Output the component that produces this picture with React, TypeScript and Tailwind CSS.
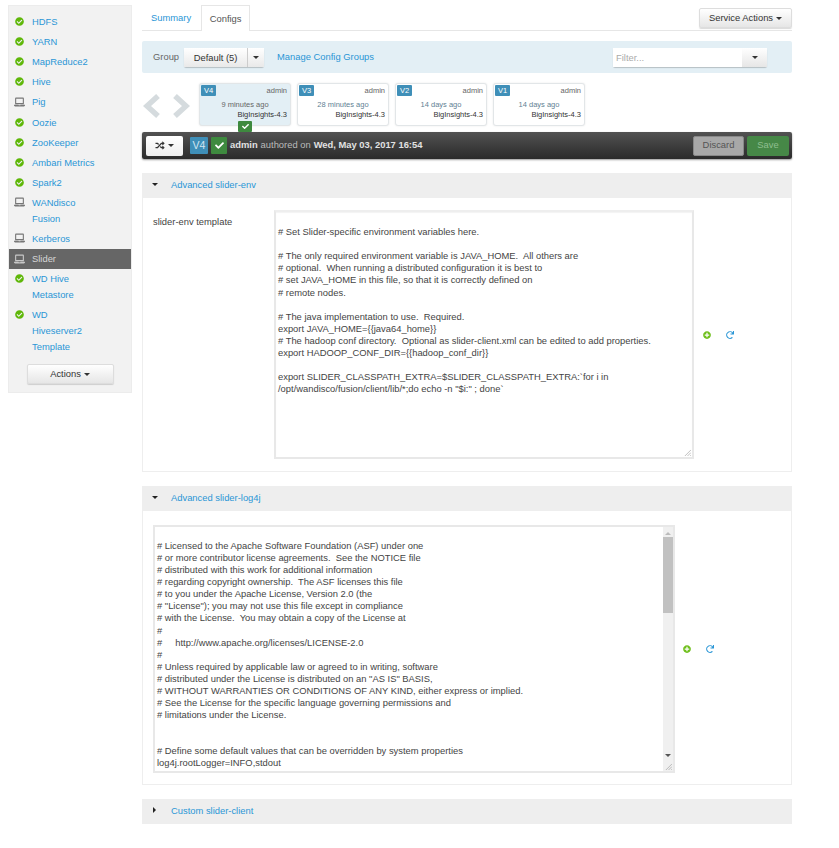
import { FaCheck, FaCheckCircle, FaLaptop, FaPlusCircle, FaRandom, FaRedo } from "react-icons/fa";

const services = [
  { lines: ["HDFS"], ok: true },
  { lines: ["YARN"], ok: true },
  { lines: ["MapReduce2"], ok: true },
  { lines: ["Hive"], ok: true },
  { lines: ["Pig"], ok: false },
  { lines: ["Oozie"], ok: true },
  { lines: ["ZooKeeper"], ok: true },
  { lines: ["Ambari Metrics"], ok: true },
  { lines: ["Spark2"], ok: true },
  { lines: ["WANdisco", "Fusion"], ok: false },
  { lines: ["Kerberos"], ok: false },
  { lines: ["Slider"], ok: false, active: true },
  { lines: ["WD Hive", "Metastore"], ok: true },
  { lines: ["WD", "Hiveserver2", "Template"], ok: true },
];

const versions = [
  { v: "V4", ago: "9 minutes ago", current: true },
  { v: "V3", ago: "28 minutes ago" },
  { v: "V2", ago: "14 days ago" },
  { v: "V1", ago: "14 days ago" },
];

const envText = `
# Set Slider-specific environment variables here.

# The only required environment variable is JAVA_HOME.  All others are
# optional.  When running a distributed configuration it is best to
# set JAVA_HOME in this file, so that it is correctly defined on
# remote nodes.

# The java implementation to use.  Required.
export JAVA_HOME={{java64_home}}
# The hadoop conf directory.  Optional as slider-client.xml can be edited to add properties.
export HADOOP_CONF_DIR={{hadoop_conf_dir}}

export SLIDER_CLASSPATH_EXTRA=$SLIDER_CLASSPATH_EXTRA:\`for i in
/opt/wandisco/fusion/client/lib/*;do echo -n "$i:" ; done\``;

const log4jText = `
# Licensed to the Apache Software Foundation (ASF) under one
# or more contributor license agreements.  See the NOTICE file
# distributed with this work for additional information
# regarding copyright ownership.  The ASF licenses this file
# to you under the Apache License, Version 2.0 (the
# "License"); you may not use this file except in compliance
# with the License.  You may obtain a copy of the License at
#
#     http://www.apache.org/licenses/LICENSE-2.0
#
# Unless required by applicable law or agreed to in writing, software
# distributed under the License is distributed on an "AS IS" BASIS,
# WITHOUT WARRANTIES OR CONDITIONS OF ANY KIND, either express or implied.
# See the License for the specific language governing permissions and
# limitations under the License.


# Define some default values that can be overridden by system properties
log4j.rootLogger=INFO,stdout
log4j.threshold=ALL`;

function Caret({ color = "border-t-[#333]" }: { color?: string }) {
  return <span className={`inline-block w-0 h-0 border-x-[3px] border-x-transparent border-t-[3px] ${color}`} />;
}

function Sidebar() {
  return (
    <aside className="w-[124px] h-[388px] mt-[5px] shrink-0 bg-[#f2f2f2] border border-[#ececec] pt-[6px]">
      {services.map((s) => (
        <div key={s.lines[0]} className={`flex py-[2.05px] ${s.active ? "bg-[#666]" : ""}`}>
          <span className="w-[16px] h-[16px] shrink-0 flex items-center">
            {s.ok ? (
              <FaCheckCircle className="ml-[6px] -mt-[1px] w-[9px] h-[9px] text-[#5fb709]" />
            ) : (
              <FaLaptop className={`w-[11px] h-[10px] ml-[5px] -mt-[1px] ${s.active ? "text-[#c8c8c8]" : "text-[#777]"}`} />
            )}
          </span>
          <div className={`pl-[7px] text-[9.4px] leading-[16px] ${s.active ? "text-[#d6d6d6]" : "text-[#2a96d6]"}`}>
            {s.lines.map((l) => (
              <div key={l}>{l}</div>
            ))}
          </div>
        </div>
      ))}
      <div className="flex justify-center mt-[7px]">
        <button className="w-[87px] h-[20px] rounded-[2px] border border-[#ddd] bg-gradient-to-b from-white to-[#e6e6e6] shadow-[0_1px_1px_rgba(0,0,0,0.15)] text-[9.4px] text-[#333] flex items-center justify-center gap-[3px]">
          Actions <Caret />
        </button>
      </div>
    </aside>
  );
}

function VersionCard({ v, ago, current }: { v: string; ago: string; current?: boolean }) {
  return (
    <div className={`relative w-[92px] h-[43px] rounded-[3px] border border-[#e2e6e8] shadow-[0_0_2px_rgba(0,0,0,0.1)] text-[7.5px] ${current ? "bg-[#e3eff5]" : "bg-white"}`}>
      <span className="absolute left-[1px] top-[1px] w-[15px] h-[11px] rounded-[1px] bg-[#3f8fb8] text-white text-[7.5px] leading-[11px] text-center">{v}</span>
      <span className="absolute right-[3px] top-[1px] leading-[11px] text-[#666]">admin</span>
      <div className={`absolute inset-x-0 top-[15px] text-center leading-[11px] ${current ? "text-[#666]" : "text-[#5f7f94]"}`}>{ago}</div>
      <div className="absolute right-[3px] top-[25px] leading-[11px] text-[#333]">BigInsights-4.3</div>
      {current && (
        <span className="absolute left-[38px] top-[37px] w-[14px] h-[11px] rounded-[1px] bg-[#3e8a3f] flex items-center justify-center">
          <FaCheck className="w-[7px] h-[7px] text-white" />
        </span>
      )}
    </div>
  );
}

function Section({ title, open = true, children, bodyClass = "" }: { title: string; open?: boolean; children?: React.ReactNode; bodyClass?: string }) {
  return (
    <section className="mt-[14px]">
      <div className="h-[25px] bg-[#eee] flex items-center pl-[10px]">
        {open ? (
          <span className="inline-block w-0 h-0 border-x-[3.5px] border-x-transparent border-t-[3.5px] border-t-[#222] -mt-[3px]" />
        ) : (
          <span className="inline-block w-0 h-0 border-y-[3.5px] border-y-transparent border-l-[3.5px] border-l-[#222] ml-[1px] -mt-[4px]" />
        )}
        <span className={`text-[9.4px] text-[#2a96d6] ${open ? "ml-[13px]" : "ml-[15px]"}`}>{title}</span>
      </div>
      {open && <div className={`border border-t-0 border-[#eee] ${bodyClass}`}>{children}</div>}
    </section>
  );
}

function Grip() {
  return (
    <svg viewBox="0 0 8 8" className="absolute right-[1px] bottom-[1px] w-[7px] h-[7px]">
      <path d="M1 8 8 1M4 8 8 4M7 8 8 7" stroke="#999" strokeWidth="0.7" fill="none" />
    </svg>
  );
}

function RowIcons() {
  return (
    <div className="flex items-center gap-[15px]">
      <FaPlusCircle className="w-[8px] h-[8px] text-[#6fbf1c]" />
      <FaRedo className="w-[8px] h-[8px] text-[#2a96d6]" />
    </div>
  );
}

function Arrows() {
  return (
    <svg viewBox="0 0 47 26" className="w-[47px] h-[26px] ml-[1px] mt-[10px]">
      <path d="M15 3 4 13l11 10M32 3l11 10-11 10" stroke="#d5dbde" strokeWidth="5.5" fill="none" />
    </svg>
  );
}

export default function App() {
  return (
    <div className="w-[839px] h-[848px] bg-white overflow-hidden flex pl-[8px] font-['Liberation_Sans',Arial,sans-serif] text-[#333]">
      <Sidebar />
      <main className="w-[650px] ml-[10px] shrink-0">
        <div className="h-[31px] pt-[5px] flex items-start border-b border-[#e6e6e6]">
          <span className="h-[25px] px-[9px] text-[9.4px] leading-[25px] text-[#2a96d6]">Summary</span>
          <span className="h-[26px] w-[49px] text-center text-[9.4px] leading-[25px] text-[#555] border border-b-0 border-[#e6e6e6] bg-white ml-[1px]">Configs</span>
          <button className="ml-auto mt-[3px] w-[93px] h-[20px] rounded-[2px] border border-[#ddd] bg-gradient-to-b from-white to-[#e6e6e6] shadow-[0_1px_1px_rgba(0,0,0,0.15)] text-[9.4px] text-[#333] flex items-center justify-center gap-[3px]">
            Service Actions <Caret />
          </button>
        </div>

        <div className="mt-[10px] h-[32px] rounded-[2px] bg-[#e3eff5] flex items-center pl-[11px] text-[9.4px]">
          <span className="text-[#666]">Group</span>
          <div className="ml-[5px] flex h-[19px] rounded-[2px] shadow-[0_1px_1px_rgba(0,0,0,0.2)]">
            <span className="w-[64px] bg-gradient-to-b from-white to-[#e9e9e9] border-r border-[#ccc] text-center leading-[19px] text-[#333]">Default (5)</span>
            <span className="w-[16px] bg-gradient-to-b from-white to-[#e9e9e9] flex items-center justify-center"><Caret /></span>
          </div>
          <span className="ml-[13px] text-[#2a96d6]">Manage Config Groups</span>
          <div className="ml-auto mr-[25px] flex h-[19px] rounded-[2px] shadow-[0_1px_1px_rgba(0,0,0,0.2)]">
            <span className="w-[129px] bg-white pl-[3px] leading-[19px] text-[#aaa]">Filter...</span>
            <span className="w-[25px] bg-gradient-to-b from-white to-[#e6e6e6] flex items-center justify-center"><Caret /></span>
          </div>
        </div>

        <div className="mt-[10px] h-[49px] flex items-start">
          <div className="w-[57px] shrink-0">
            <Arrows />
          </div>
          <div className="flex gap-[6px]">
            {versions.map((item) => (
              <VersionCard key={item.v} {...item} />
            ))}
          </div>
        </div>

        <div className="h-[27px] rounded-[2px] bg-gradient-to-b from-[#525252] to-[#2b2b2b] flex items-center pl-[4px] pr-[3px] text-[9.4px] shadow-[0_1px_2px_rgba(0,0,0,0.4)]">
          <button className="w-[37px] h-[20px] rounded-[2px] bg-gradient-to-b from-white to-[#eee] flex items-center justify-center gap-[3px]">
            <FaRandom className="w-[10px] h-[9px] text-[#333]" /> <Caret />
          </button>
          <span className="ml-[7px] w-[18px] h-[17px] rounded-[1px] bg-[#3f8fb8] text-[#d4e6f0] text-center leading-[17px] text-[10.5px]">V4</span>
          <span className="ml-[3px] w-[16px] h-[17px] rounded-[1px] bg-[#3e8a3f] flex items-center justify-center">
            <FaCheck className="w-[9px] h-[9px] text-white" />
          </span>
          <span className="ml-[3px] text-[#e2e2e2] font-bold">admin</span>
          <span className="ml-[3px] text-[#bbb]">authored on</span>
          <span className="ml-[3px] text-[#e2e2e2] font-bold">Wed, May 03, 2017 16:54</span>
          <button className="ml-auto w-[51px] h-[20px] rounded-[2px] bg-[#a8a8a8] border border-[#888] text-[#555]">Discard</button>
          <button className="ml-[3px] w-[42px] h-[20px] rounded-[2px] bg-[#468847] text-[#8fbf90]">Save</button>
        </div>

        <Section title="Advanced slider-env" bodyClass="h-[274px] flex pt-[12px] pl-[10px]">
          <span className="w-[121px] pt-[2px] text-[9.4px] leading-[20px] text-[#444]">slider-env template</span>
          <div className="relative w-[420px] h-[249px] border-2 border-[#e8e8e8] border-t-[#eee] shadow-[inset_0_1px_1px_rgba(0,0,0,0.05)] px-[2px] py-[2px] text-[9.4px] leading-[12.1px] text-[#444] whitespace-pre-wrap">
            {envText}
            <Grip />
          </div>
          <div className="ml-[9px] h-[249px] flex items-center">
            <RowIcons />
          </div>
        </Section>

        <Section title="Advanced slider-log4j" bodyClass="h-[274px] flex pt-[14px] pl-[10px]">
          <div className="relative flex w-[522px] h-[248px] border-2 border-[#e8e8e8] overflow-hidden text-[9.4px] leading-[12.06px] text-[#444]">
            <div className="flex-1 px-[2px] pt-[1px] whitespace-pre-wrap overflow-hidden">{log4jText}</div>
            <div className="w-[10px] shrink-0 bg-[#f0f0f0] flex flex-col items-center">
              <span className="mt-[5px] w-0 h-0 border-x-[3px] border-x-transparent border-b-[3px] border-b-[#bbb]" />
              <span className="mt-[2px] w-full h-[76px] bg-[#c1c1c1]" />
              <span className="mt-auto mb-[14px] w-0 h-0 border-x-[3px] border-x-transparent border-t-[3px] border-t-[#555]" />
            </div>
            <Grip />
          </div>
          <div className="ml-[8px] h-[248px] flex items-center">
            <RowIcons />
          </div>
        </Section>

        <Section title="Custom slider-client" open={false} />
      </main>
    </div>
  );
}
